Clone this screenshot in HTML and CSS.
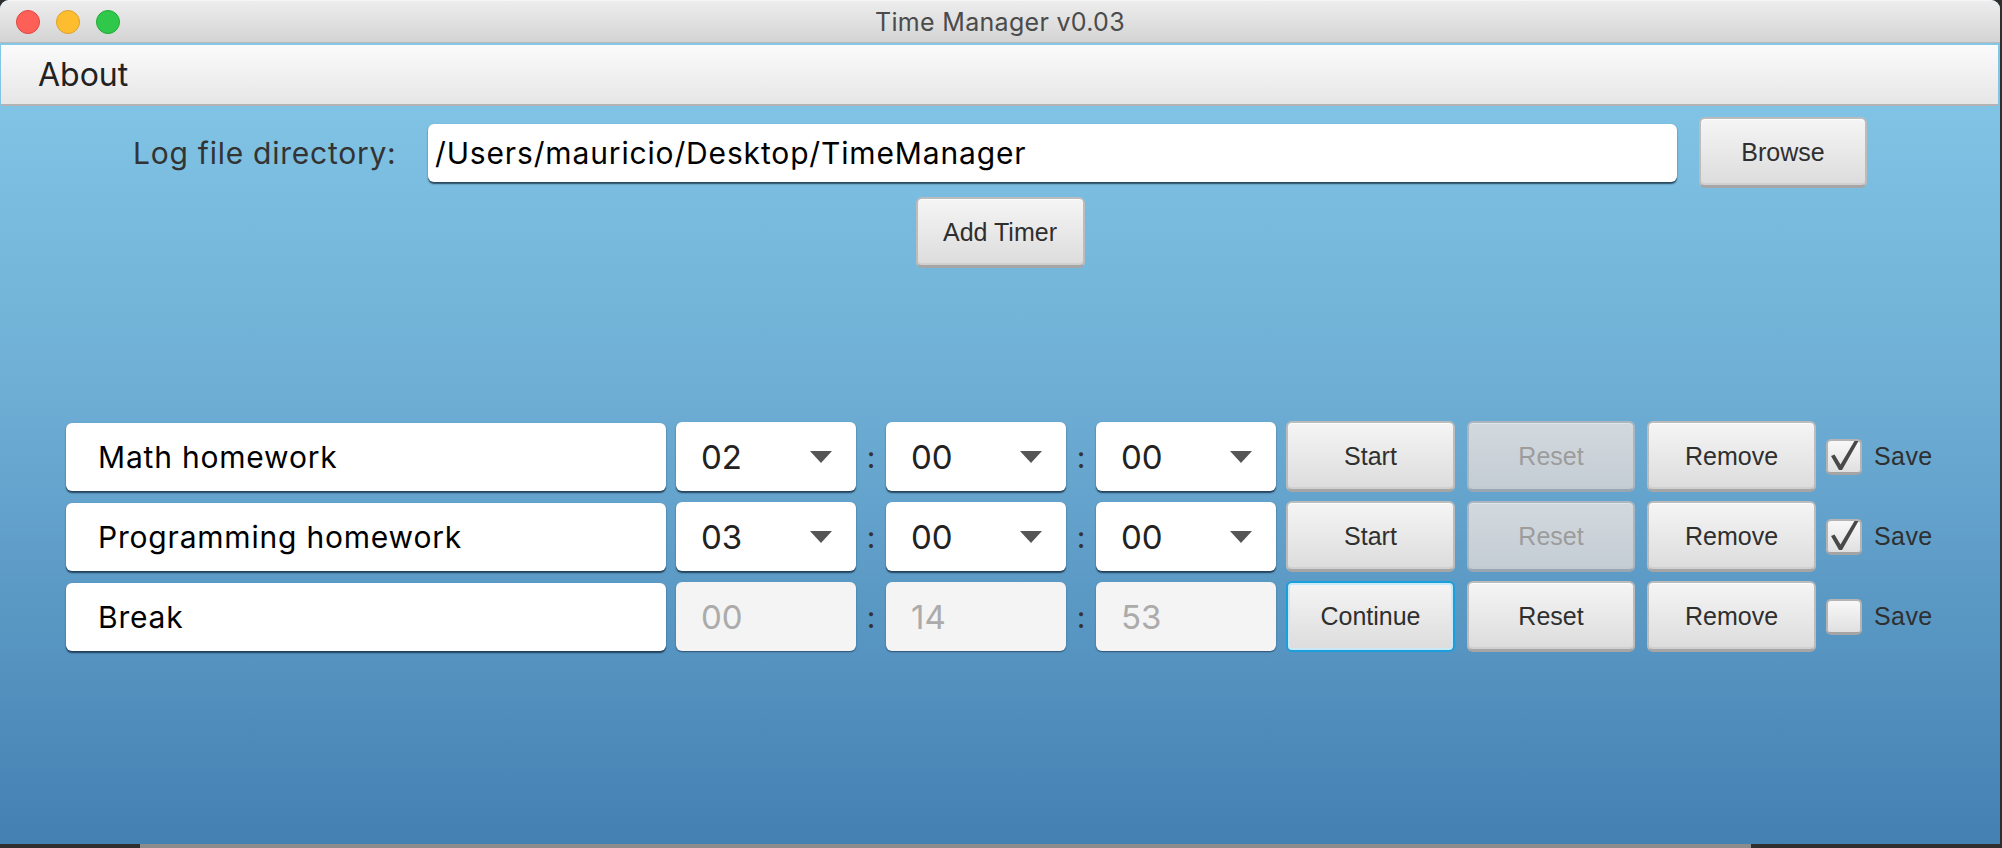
FILE: index.html
```html
<!DOCTYPE html>
<html lang="en">
<head>
<meta charset="utf-8">
<title>Time Manager v0.03</title>
<link rel="stylesheet" href="styles.css">
</head>
<body>
<div class="screen">
  <div class="window">
    <div class="titlebar">
      <div class="lights">
        <span class="light red"></span>
        <span class="light yellow"></span>
        <span class="light green"></span>
      </div>
      <div class="title">Time Manager v0.03</div>
      <div class="spacer"></div>
    </div>
    <div class="content">
      <div class="menubar"><span class="menu-item">About</span></div>

      <div class="dir-row">
        <span class="dir-label">Log file directory:</span>
        <div class="field dir-field">/Users/mauricio/Desktop/TimeManager</div>
        <button class="btn browse">Browse</button>
      </div>

      <div class="add-row">
        <button class="btn add">Add Timer</button>
      </div>

      <div class="timers">
        <div class="timer-row">
          <div class="field name-field">Math homework</div>
          <div class="combo"><span>02</span><span class="arrow"></span></div>
          <span class="colon">:</span>
          <div class="combo"><span>00</span><span class="arrow"></span></div>
          <span class="colon">:</span>
          <div class="combo"><span>00</span><span class="arrow"></span></div>
          <div class="btn-group">
            <button class="btn">Start</button>
            <button class="btn disabled">Reset</button>
            <button class="btn">Remove</button>
          </div>
          <label class="save">
            <span class="check checked"><svg viewBox="0 0 32 32" width="32" height="32"><polygon points="3,17 6.5,15.5 12.5,25.5 26.5,2 30.5,2 14,31 11,31" fill="#484848"/></svg></span>
            <span class="save-text">Save</span>
          </label>
        </div>

        <div class="timer-row">
          <div class="field name-field">Programming homework</div>
          <div class="combo"><span>03</span><span class="arrow"></span></div>
          <span class="colon">:</span>
          <div class="combo"><span>00</span><span class="arrow"></span></div>
          <span class="colon">:</span>
          <div class="combo"><span>00</span><span class="arrow"></span></div>
          <div class="btn-group">
            <button class="btn">Start</button>
            <button class="btn disabled">Reset</button>
            <button class="btn">Remove</button>
          </div>
          <label class="save">
            <span class="check checked"><svg viewBox="0 0 32 32" width="32" height="32"><polygon points="3,17 6.5,15.5 12.5,25.5 26.5,2 30.5,2 14,31 11,31" fill="#484848"/></svg></span>
            <span class="save-text">Save</span>
          </label>
        </div>

        <div class="timer-row">
          <div class="field name-field">Break</div>
          <div class="combo off"><span>00</span></div>
          <span class="colon">:</span>
          <div class="combo off"><span>14</span></div>
          <span class="colon">:</span>
          <div class="combo off"><span>53</span></div>
          <div class="btn-group">
            <button class="btn focused">Continue</button>
            <button class="btn">Reset</button>
            <button class="btn">Remove</button>
          </div>
          <label class="save">
            <span class="check"></span>
            <span class="save-text">Save</span>
          </label>
        </div>
      </div>
    </div>
  </div>
  <div class="desktop-strip"></div>
</div>
</body>
</html>
```
FILE: styles.css
```css
* { box-sizing: border-box; }

html, body {
  margin: 0;
  padding: 0;
}

body {
  background: #2e2e2e;
  font-family: Inter, "Liberation Sans", sans-serif;
}

.screen {
  width: 2002px;
  height: 848px;
  overflow: hidden;
  display: flex;
  flex-direction: column;
}

.window {
  width: 2000px;
  height: 844px;
  border-radius: 9px 9px 0 0;
  overflow: hidden;
  display: flex;
  flex-direction: column;
  background: #83c7e7;
}

/* ---------- title bar ---------- */
.titlebar {
  height: 43px;
  flex: none;
  display: grid;
  grid-template-columns: 1fr auto 1fr;
  align-items: center;
  background: linear-gradient(#ededed, #d4d4d4);
  border-top: 1px solid #f6f6f6;
  border-bottom: 1px solid #b9b9b9;
}

.lights {
  display: flex;
  gap: 16px;
  padding-left: 16px;
}

.light {
  width: 24px;
  height: 24px;
  border-radius: 50%;
  display: block;
}

.red { background: #fe6058; border: 1px solid #e1463f; }
.yellow { background: #febc2f; border: 1px solid #dea228; }
.green { background: #2fc84a; border: 1px solid #20ab32; }

.title {
  font-size: 25px;
  color: #4b4b4b;
  letter-spacing: 0.3px;
}

/* ---------- content ---------- */
.content {
  flex: 1;
  display: flex;
  flex-direction: column;
  background: linear-gradient(to bottom, #84c8e8 0%, #6dadd4 45%, #4480b2 100%);
}

.menubar {
  margin: 2px 2px 0 1px;
  height: 61px;
  flex: none;
  display: flex;
  align-items: center;
  background: linear-gradient(#fbfbfb, #e6e6e6);
  border-bottom: 2px solid #b3b3b3;
}

.menu-item {
  padding-left: 37px;
  font-size: 32px;
  color: #222;
}

.dir-row {
  margin-top: 11px;
  height: 71px;
  display: flex;
  align-items: center;
  padding-left: 133px;
}

.dir-label {
  width: 263px;
  margin-right: 32px;
  font-size: 30px;
  letter-spacing: 0.75px;
  color: #333;
  white-space: nowrap;
}

.field {
  background: #fff;
  border-radius: 6px;
  box-shadow: 0 1.5px 1.5px rgba(15, 35, 55, 0.75);
  display: flex;
  align-items: center;
  color: #000;
  font-size: 30px;
  letter-spacing: 0.85px;
  white-space: nowrap;
}

.dir-field {
  width: 1249px;
  height: 58px;
  padding-left: 7px;
  margin-right: 22px;
}

/* ---------- buttons ---------- */
.btn {
  height: 71px;
  width: 169px;
  padding: 0;
  margin: 0;
  font-family: "Liberation Sans", Arial, sans-serif;
  font-size: 25px;
  color: #2f2f2f;
  background: linear-gradient(#f5f5f5, #dcdcdc);
  border: 2px solid #bcbcbc;
  border-bottom: 3px solid #a6a6a6;
  border-radius: 6px;
  box-shadow: inset 0 1px 0 #ffffff, inset 0 -2px 0 #d0d0d0;
}

.browse { width: 168px; }

.btn.disabled {
  color: #9c9c9c;
  background: linear-gradient(#d2d9de, #c4cdd4);
  border-color: #aab6c0;
  border-bottom-color: #9aa7b2;
  box-shadow: inset 0 1px 0 #dfe5e9, inset 0 -2px 0 #c2cbd2;
}

.btn.focused {
  border: 2px solid #1a9edc;
  box-shadow: inset 0 0 0 2px #c9e9f7;
}

.add-row {
  margin-top: 9px;
  display: flex;
  justify-content: center;
}

/* ---------- timers ---------- */
.timers {
  margin-top: 153px;
  display: flex;
  flex-direction: column;
  gap: 9px;
}

.timer-row {
  height: 71px;
  display: flex;
  align-items: center;
  padding-left: 66px;
  gap: 10px;
}

.name-field {
  width: 600px;
  height: 68px;
  padding-left: 32px;
  letter-spacing: 0.8px;
}

.combo {
  width: 180px;
  height: 69px;
  background: #fff;
  border-radius: 6px;
  box-shadow: 0 1.5px 1.5px rgba(15, 35, 55, 0.75);
  display: flex;
  align-items: center;
  justify-content: space-between;
  padding: 0 24px 0 25px;
  font-size: 33px;
  color: #222;
}

.combo.off {
  background: #f4f4f4;
  color: #ababab;
  box-shadow: 0 1px 1.5px rgba(15, 35, 55, 0.6);
}

.arrow {
  width: 0;
  height: 0;
  border-left: 11.5px solid transparent;
  border-right: 11.5px solid transparent;
  border-top: 12px solid #555;
}

.colon {
  width: 10px;
  text-align: center;
  font-size: 30px;
  color: #333;
}

.btn-group {
  display: flex;
  gap: 12px;
}

.btn-group .btn:nth-child(2) { width: 168px; }

.save {
  display: flex;
  align-items: center;
  gap: 12px;
}

.check {
  width: 36px;
  height: 36px;
  border: 2px solid #b4b4b4;
  border-bottom: 3px solid #a4a4a4;
  border-radius: 5px;
  background: linear-gradient(#f8f8f8, #e0e0e0);
  display: flex;
  align-items: center;
  justify-content: center;
}

.check svg { display: block; margin-top: -2px; }

.save-text {
  font-family: "Liberation Sans", Arial, sans-serif;
  font-size: 25px;
  letter-spacing: 0.4px;
  color: #2f2f2f;
}

/* ---------- desktop strip below window ---------- */
.desktop-strip {
  height: 4px;
  width: 2002px;
  background: linear-gradient(to right, #2f2f2f 0, #2f2f2f 140px, #8c8c8c 140px, #8c8c8c 1751px, #2f2f2f 1751px);
}
```
